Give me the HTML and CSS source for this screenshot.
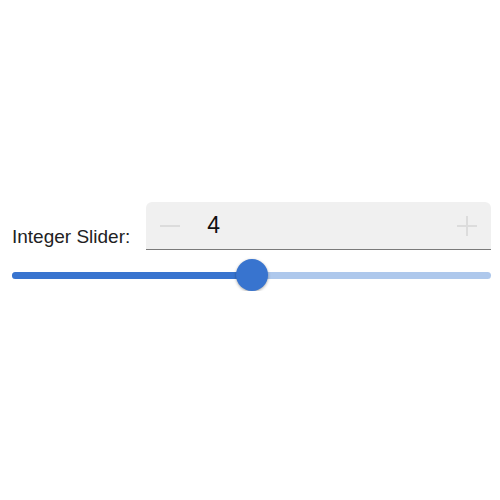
FILE: index.html
```html
<!DOCTYPE html>
<html>
<head>
  <title>Integer Slider</title>
  <link rel="stylesheet" href="styles.css">
</head>
<body>
  <div class="widget">
    <div class="row">
      <label class="label">Integer Slider:</label>
      <div class="field">
        <span class="step">
          <svg width="20" height="20" viewBox="0 0 20 20"><path d="M0 10h20" stroke="currentColor" stroke-width="2"/></svg>
        </span>
        <span class="value">4</span>
        <span class="step plus">
          <svg width="20" height="20" viewBox="0 0 20 20"><path d="M0 10h20M10 0v20" stroke="currentColor" stroke-width="2"/></svg>
        </span>
      </div>
    </div>
    <div class="slider">
      <div class="track">
        <div class="fill" style="width: 50%"></div>
        <div class="thumb" style="left: 50%"></div>
      </div>
    </div>
  </div>
</body>
</html>
```

FILE: styles.css
```css
body {
  margin: 0;
  background: #fff;
  font-family: "Liberation Sans", Arial, sans-serif;
  color: #222;
}
.widget {
  padding: 202px 9px 0 12px;
}
.row {
  display: flex;
  align-items: flex-end;
}
.label {
  font-size: 19px;
  margin-right: 16px;
  margin-bottom: 2px;
  white-space: nowrap;
}
.field {
  flex: 1;
  height: 47px;
  display: flex;
  align-items: center;
  background: #f0f0f0;
  border-radius: 6px 6px 0 0;
  border-bottom: 1px solid #7a7a7a;
  padding: 0 14px;
}
.step { color: #dcdcdc; display: flex; }
.value {
  flex: 1;
  font-size: 23px;
  margin-left: 27px;
  color: #111;
}
.slider {
  margin-top: 9px;
  height: 32px;
  display: flex;
  align-items: center;
}
.track {
  position: relative;
  width: 100%;
  height: 7px;
  border-radius: 4px;
  background: #aec8ec;
}
.fill {
  height: 100%;
  border-radius: 4px;
  background: #3874cf;
}
.thumb {
  position: absolute;
  top: 50%;
  width: 32px;
  height: 32px;
  margin: -16px 0 0 -16px;
  border-radius: 50%;
  background: #3874cf;
  box-shadow: 0 1px 3px rgba(0,0,0,0.35);
}
```
